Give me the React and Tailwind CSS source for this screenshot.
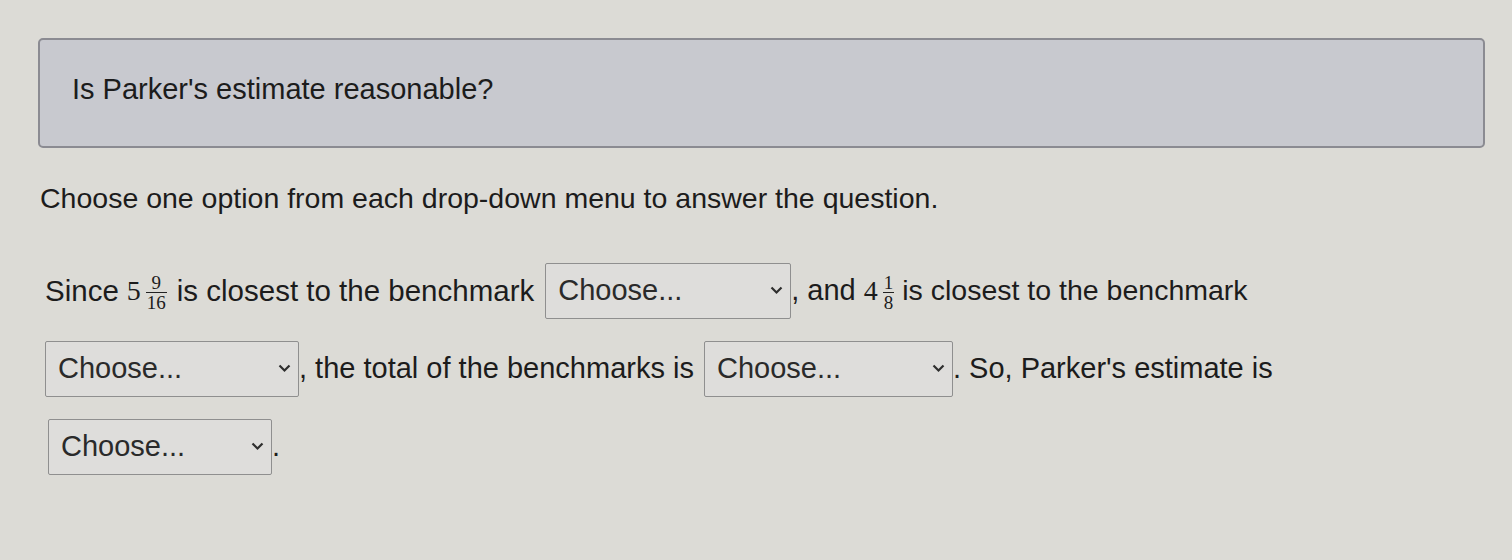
import React from 'react';

const Chevron = () => (
  <svg width="13" height="9" viewBox="0 0 13 9" className="shrink-0">
    <path d="M1.5 1.5 L6.5 6.5 L11.5 1.5" fill="none" stroke="#2e2e2e" strokeWidth="2.2" />
  </svg>
);

const Dropdown = ({ width }) => (
  <span
    className="inline-flex items-center justify-between h-[56px] border border-[#8f8f8f] bg-[#dedddb] pl-[12px] pr-[7px] rounded-[2px] align-middle text-[29px]"
    style={{ width }}
  >
    <span className="text-[#2a2a2a]">Choose...</span>
    <Chevron />
  </span>
);

const Mixed = ({ whole, num, den, gap = 'mr-[10px]' }) => (
  <span className={`inline-flex items-center align-middle font-['Liberation_Serif',serif] ml-[8px] ${gap}`}>
    <span className="text-[28px] leading-none">{whole}</span>
    <span className="inline-flex flex-col items-center ml-[5px] text-[19px] leading-[19px] mt-[4px]">
      <span>{num}</span>
      <span className="border-t border-[#222] px-[1px]">{den}</span>
    </span>
  </span>
);

export default function App() {
  return (
    <div className="w-[1512px] h-[560px] bg-[#dcdbd6] font-['Liberation_Sans',Arial,sans-serif] text-[#1c1c1c] text-[29px] pt-[38px] pl-[38px] pr-[27px] overflow-hidden">
      <div className="h-[110px] bg-[#c8c9cf] border-2 border-[#8b8b92] rounded-[5px] flex items-center pl-[32px] pb-[6px]">
        <span>Is Parker's estimate reasonable?</span>
      </div>

      <div className="mt-[29px] pl-[2px] text-[28.5px]">Choose one option from each drop-down menu to answer the question.</div>

      <div className="mt-[43px] pl-[7px] flex flex-col gap-[22px]">
        <div className="flex items-center h-[56px] whitespace-nowrap">
          <span className="text-[29.5px]">Since</span>
          <Mixed whole="5" num="9" den="16" />
          <span className="mr-[11px] text-[29.5px]">is closest to the benchmark</span>
          <Dropdown width={246} />
          <span>, and</span>
          <Mixed whole="4" num="1" den="8" gap="mr-[8px]" />
          <span className="text-[28.5px]">is closest to the benchmark</span>
        </div>
        <div className="flex items-center h-[56px] whitespace-nowrap">
          <Dropdown width={254} />
          <span className="mr-[10px]">, the total of the benchmarks is</span>
          <Dropdown width={249} />
          <span>. So, Parker's estimate is</span>
        </div>
        <div className="flex items-center h-[56px] whitespace-nowrap pl-[3px]">
          <Dropdown width={224} />
          <span>.</span>
        </div>
      </div>
    </div>
  );
}
